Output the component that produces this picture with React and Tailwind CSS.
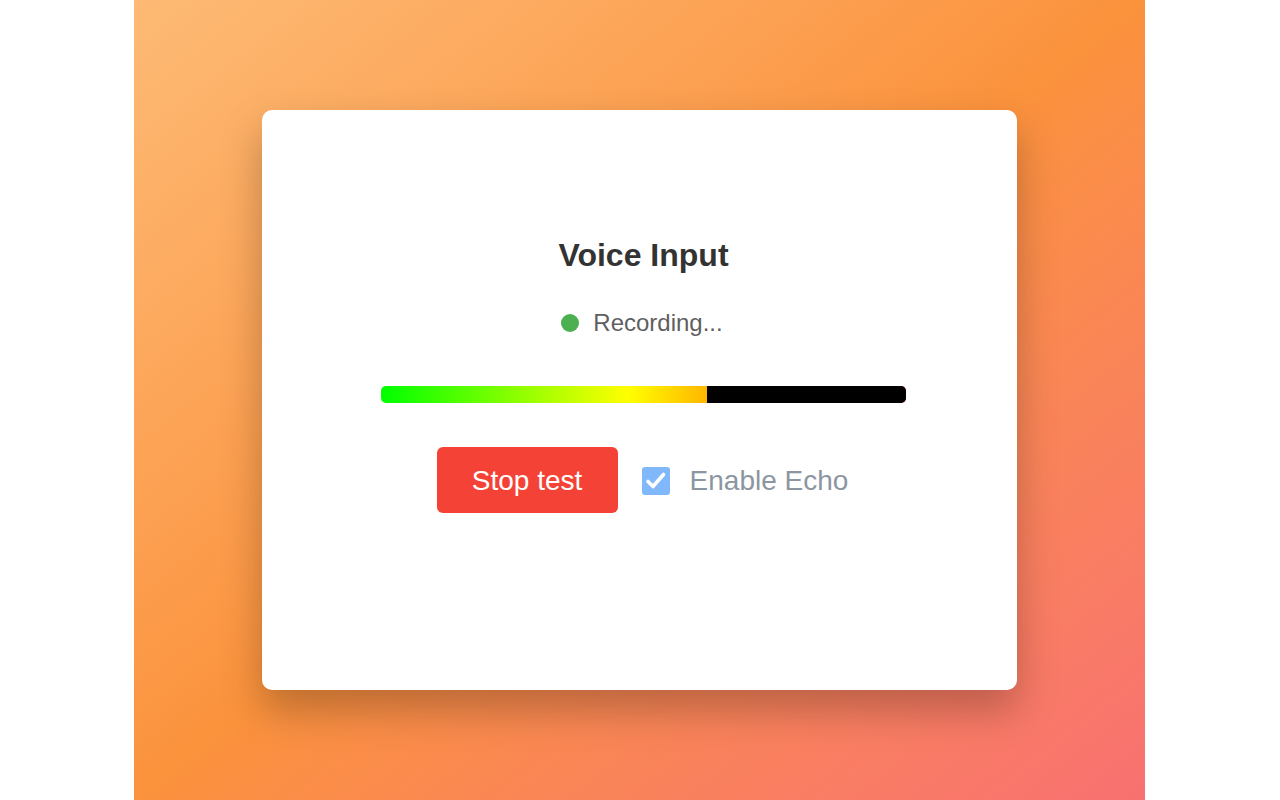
import React from 'react';

const App = () => {
  return (
    <div className="w-full h-screen bg-white" style={{ fontFamily: '"Liberation Sans", Arial, sans-serif' }}>
      <div className="w-[1011px] h-full ml-[134px] bg-gradient-to-br from-[#fdba74] via-[#fb923c] to-[#f87171] flex items-center">
        <div className="w-[755px] h-[580px] mx-auto bg-white rounded-[10px] shadow-[0_20px_40px_rgba(0,0,0,0.25)] flex flex-col items-center pt-[127px] pl-[8px]">
          <h1 className="text-[32px] leading-[37px] font-bold text-[#333333]">Voice Input</h1>

          <div className="mt-[35px] flex items-center gap-[14px] h-[28px] mr-[3px]">
            <span className="w-[18px] h-[18px] rounded-full bg-[#4caf50]" />
            <span className="text-[24px] leading-[28px] text-[#5f5f5f]">Recording...</span>
          </div>

          <div className="mt-[49px] w-[525px] h-[17px] rounded-[5px] overflow-hidden flex bg-[linear-gradient(to_right,#00ff00,#ffff00_47%,#ff0000)]">
            <div className="w-[62%]" />
            <div className="flex-1 bg-black" />
          </div>

          <div className="mt-[44px] flex items-center mr-[2px]">
            <button className="w-[181px] h-[66px] rounded-[6px] bg-[#f44336] text-white text-[28px] pt-[2px]">
              Stop test
            </button>
            <label className="ml-[24px] flex items-center gap-[20px] pt-[2px]">
              <span className="w-[28px] h-[28px] rounded-[3px] bg-[#80b8fb] flex items-center justify-center">
                <svg width="28" height="28" viewBox="0 0 28 28" fill="none">
                  <path d="M6 14.5 L11 19.5 L21.5 7.5" stroke="white" strokeWidth="3.6" strokeLinecap="round" strokeLinejoin="round" />
                </svg>
              </span>
              <span className="text-[28px] text-[#8c96a1]">Enable Echo</span>
            </label>
          </div>
        </div>
      </div>
    </div>
  );
};

export default App;
